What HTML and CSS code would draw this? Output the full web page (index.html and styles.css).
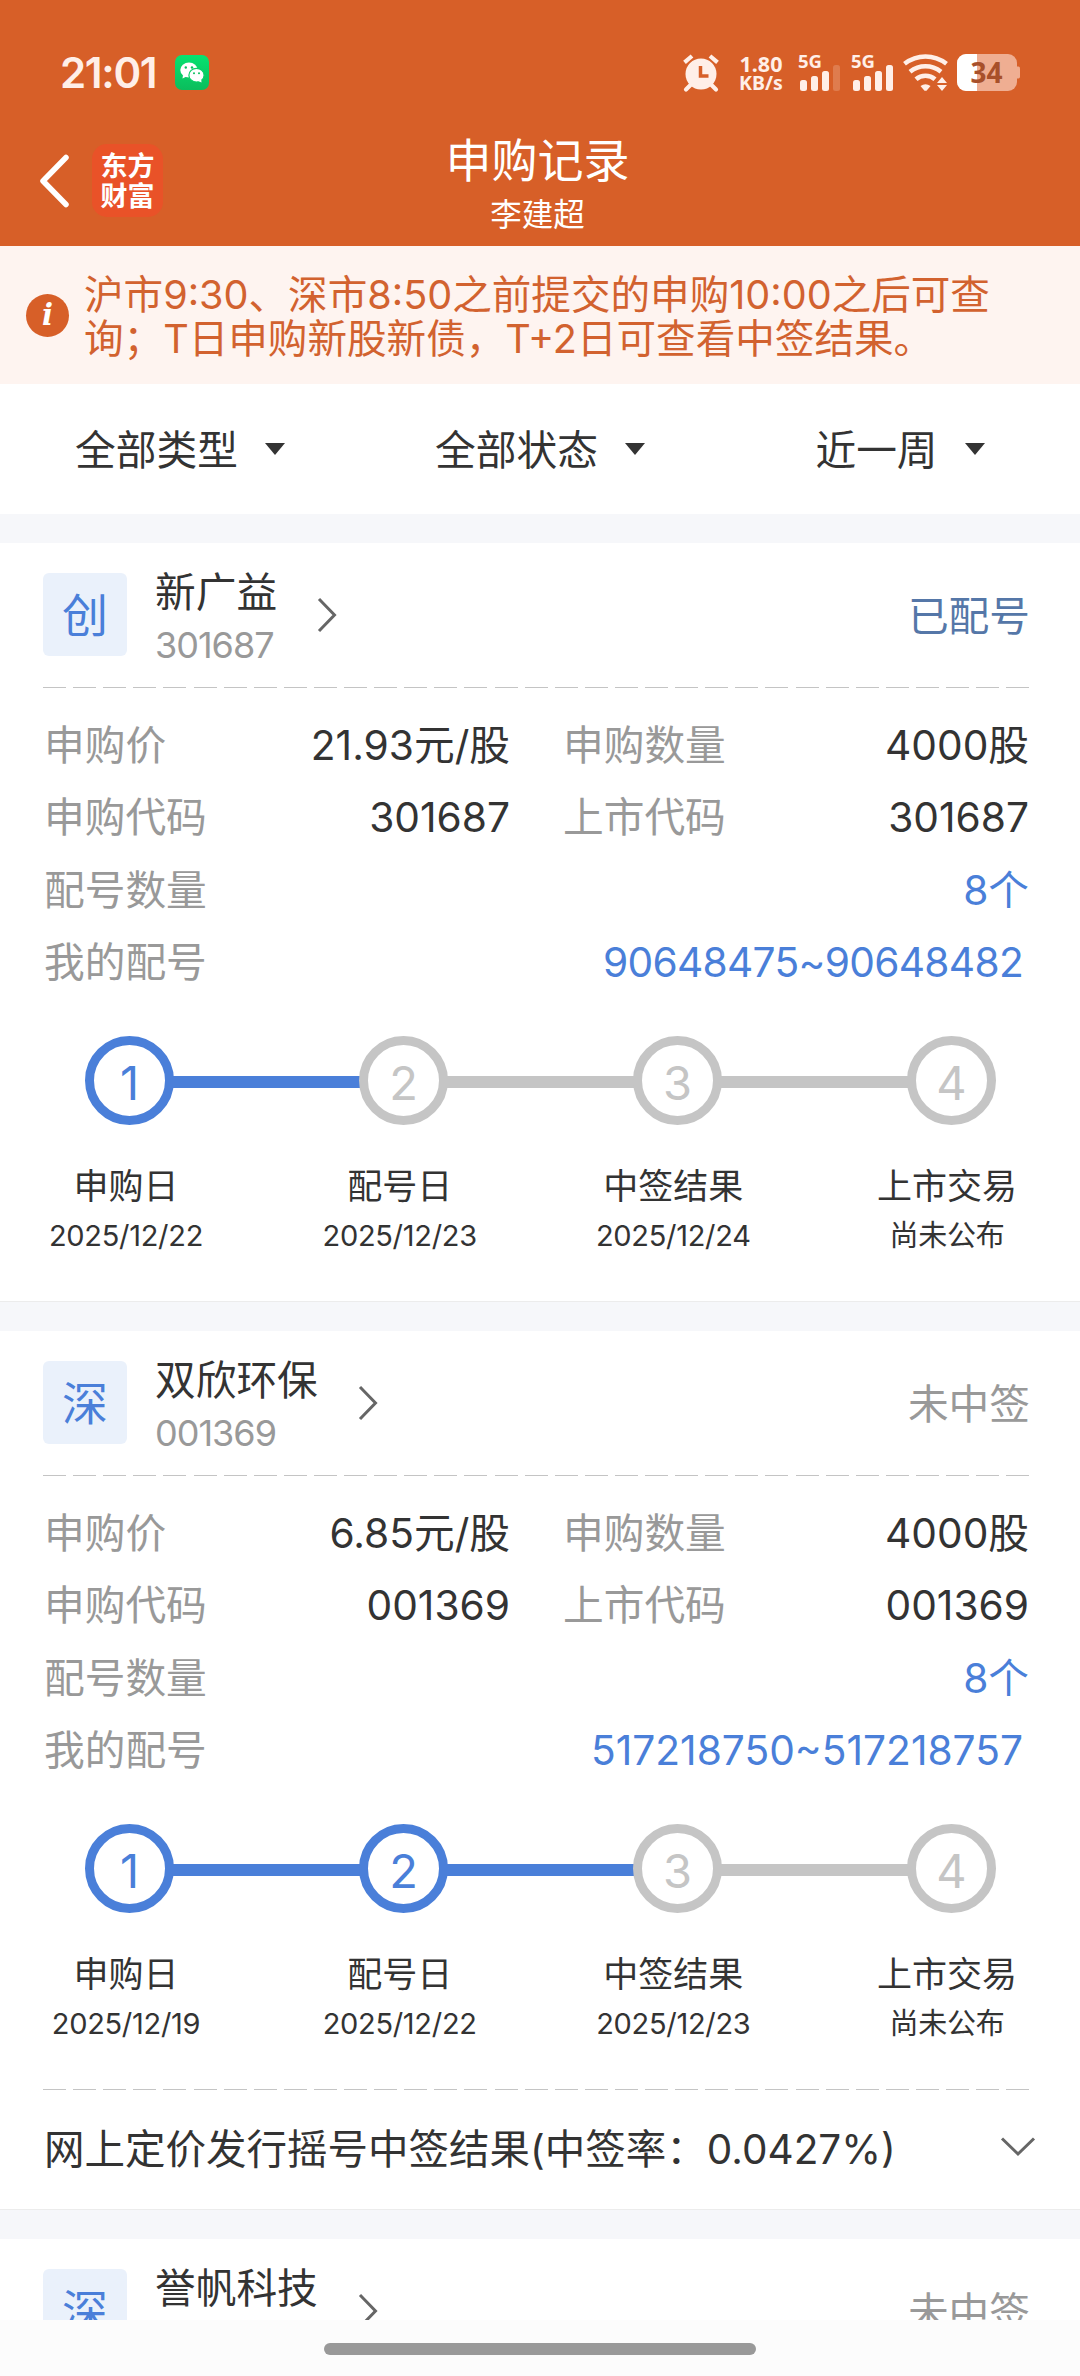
FILE: index.html
```html
<!DOCTYPE html>
<html lang="zh-CN">
<head>
  <meta charset="UTF-8">
  <meta name="viewport" content="width=device-width, initial-scale=1.0">
  <title>申购记录</title>
  <link rel="stylesheet" href="styles.css">
</head>
<body>
  <header>
    <div class="status-bar">
      <span class="time">21:01</span>
      <svg class="wechat" width="34" height="35" viewBox="0 0 34 35">
        <defs>
          <linearGradient id="green" x1="0" y1="0" x2="0" y2="1">
            <stop offset="0" stop-color="#06e270"/>
            <stop offset="1" stop-color="#0bbd5c"/>
          </linearGradient>
        </defs>
        <rect width="34" height="35" rx="7" fill="url(#green)"/>
        <path d="M8 20l-.5 3.5 4-2z" fill="#fff"/>
        <ellipse cx="14" cy="15" rx="8.7" ry="7.6" fill="#fff"/>
        <ellipse cx="21.5" cy="20.2" rx="7.6" ry="6.8" fill="#fff" stroke="#09cf66" stroke-width="1.2"/>
        <path d="M23 26l3.5 1.5-.3-3z" fill="#fff"/>
        <g fill="#0abf5e">
          <circle cx="10.8" cy="12.5" r="1.2"/>
          <circle cx="17" cy="12.5" r="1.2"/>
          <circle cx="19" cy="18.3" r="1"/>
          <circle cx="24" cy="18.3" r="1"/>
        </g>
      </svg>

      <div class="status-right">
        <svg width="36" height="37" viewBox="0 0 36 37">
          <g stroke="#ffefe8" stroke-width="4.2" fill="none">
            <path d="M1.5 8.3L9 2M27 2l7.500 6.300"/>
            <path d="M3 35.500l5-5M33 35.500l-5-5" stroke-linecap="round"/>
          </g>
          <circle cx="18" cy="20" r="15.500" fill="#ffefe8"/>
          <path d="M17.500 12v10h8" stroke="#d75f28" stroke-width="3.500" fill="none"/>
        </svg>
        <div class="speed"><span>1.80</span><span>KB/s</span></div>
        <svg class="signal" width="43" height="37" viewBox="0 0 43 37">
          <text x="0" y="14">5G</text>
          <rect x="2" y="26" width="7" height="11" rx="2.500"/>
          <rect x="13" y="22" width="7" height="15" rx="2.500"/>
          <rect x="24" y="17" width="7" height="20" rx="2.500"/>
          <rect x="35" y="11" width="7" height="26" rx="2.500" opacity=".2"/>
        </svg>
        <svg class="signal second" width="43" height="37" viewBox="0 0 43 37">
          <text x="0" y="14">5G</text>
          <rect x="2" y="26" width="7" height="11" rx="2.500"/>
          <rect x="13" y="22" width="7" height="15" rx="2.500"/>
          <rect x="24" y="17" width="7" height="20" rx="2.500"/>
          <rect x="35" y="11" width="7" height="26" rx="2.500"/>
        </svg>
        <svg class="wifi" width="46" height="37" viewBox="0 0 46 37">
          <g stroke="#ffefe8" stroke-width="4.600" fill="none">
            <path d="M1.500 9.800Q11 2.500 22.500 2.500T43.500 9.800"/>
            <path d="M7 17.800Q14 12.300 22.500 12.300T38 17.800"/>
            <path d="M13 25.300Q17 21.800 22.500 21.800T32 25.300"/>
          </g>
          <path d="M17.500 32q5-3.500 10 0l-4 4.800h-2z" fill="#ffefe8"/>
          <path d="M39 23l5 6H34zM39 37l5-6H34z" fill="#ffefe8"/>
        </svg>
        <svg class="battery" width="63" height="37" viewBox="0 0 63 37">
          <path d="M60 12.500h1.500q1.500 0 1.500 2v8q0 2-1.500 2H60z" fill="#efae92"/>
          <rect width="60" height="37" rx="9" fill="#efae92"/>
          <path d="M9 0h11v37H9a9 9 0 0 1-9-9V9a9 9 0 0 1 9-9z" fill="#fff"/>
          <text x="29.500" y="28.500">34</text>
        </svg>
      </div>
    </div>

    <div class="nav">
      <div class="nav-left">
        <svg width="31" height="54" viewBox="0 0 31 54">
          <path d="M27 3.500L4 27l23 23.500" fill="none" stroke="#fff" stroke-width="5.500" stroke-linecap="round" stroke-linejoin="round"/>
        </svg>
        <div class="logo">东方<br>财富</div>
      </div>
      <div class="nav-title">
        <h1>申购记录</h1>
        <p>李建超</p>
      </div>
    </div>
  </header>

  <div class="notice">
    <span class="info">i</span>
    <p>沪市9:30、深市8:50之前提交的申购10:00之后可查<br>询；T日申购新股新债，T+2日可查看中签结果。</p>
  </div>

  <div class="filters">
    <div>全部类型<i></i></div>
    <div>全部状态<i></i></div>
    <div>近一周<i></i></div>
  </div>

  <main>
    <section class="card">
      <div class="card-head">
        <span class="badge">创</span>
        <div class="stock">
          <h2>新广益</h2>
          <p>301687</p>
        </div>
        <svg class="arrow" width="20" height="34" viewBox="0 0 20 34"><path d="M2 1l15.500 16L2 33"/></svg>
        <span class="state done">已配号</span>
      </div>
      <div class="dash"></div>
      <div class="rows">
        <div class="row">
          <div><span>申购价</span><b>21.93元/股</b></div>
          <div><span>申购数量</span><b>4000股</b></div>
        </div>
        <div class="row">
          <div><span>申购代码</span><b>301687</b></div>
          <div><span>上市代码</span><b>301687</b></div>
        </div>
        <div class="row">
          <div><span>配号数量</span><b class="blue">8个</b></div>
        </div>
        <div class="row">
          <div><span>我的配号</span><b class="blue range">90648475~90648482</b></div>
        </div>
      </div>
      <div class="steps">
        <span class="step on">1</span>
        <span class="line on"></span>
        <span class="step">2</span>
        <span class="line"></span>
        <span class="step">3</span>
        <span class="line"></span>
        <span class="step">4</span>
      </div>
      <div class="labels">
        <div><h3>申购日</h3><p>2025/12/22</p></div>
        <div><h3>配号日</h3><p>2025/12/23</p></div>
        <div><h3>中签结果</h3><p>2025/12/24</p></div>
        <div><h3>上市交易</h3><p>尚未公布</p></div>
      </div>
    </section>

    <section class="card">
      <div class="card-head">
        <span class="badge">深</span>
        <div class="stock">
          <h2>双欣环保</h2>
          <p>001369</p>
        </div>
        <svg class="arrow" width="20" height="34" viewBox="0 0 20 34"><path d="M2 1l15.500 16L2 33"/></svg>
        <span class="state">未中签</span>
      </div>
      <div class="dash"></div>
      <div class="rows">
        <div class="row">
          <div><span>申购价</span><b>6.85元/股</b></div>
          <div><span>申购数量</span><b>4000股</b></div>
        </div>
        <div class="row">
          <div><span>申购代码</span><b>001369</b></div>
          <div><span>上市代码</span><b>001369</b></div>
        </div>
        <div class="row">
          <div><span>配号数量</span><b class="blue">8个</b></div>
        </div>
        <div class="row">
          <div><span>我的配号</span><b class="blue range long">517218750~517218757</b></div>
        </div>
      </div>
      <div class="steps">
        <span class="step on">1</span>
        <span class="line on"></span>
        <span class="step on">2</span>
        <span class="line on"></span>
        <span class="step">3</span>
        <span class="line"></span>
        <span class="step">4</span>
      </div>
      <div class="labels">
        <div><h3>申购日</h3><p>2025/12/19</p></div>
        <div><h3>配号日</h3><p>2025/12/22</p></div>
        <div><h3>中签结果</h3><p>2025/12/23</p></div>
        <div><h3>上市交易</h3><p>尚未公布</p></div>
      </div>
      <div class="dash"></div>
      <div class="result">
        <p>网上定价发行摇号中签结果(中签率：0.0427%)</p>
        <svg width="34" height="20" viewBox="0 0 34 20"><path d="M1 1.500l16 15.500 16-15.500"/></svg>
      </div>
    </section>

    <section class="card">
      <div class="card-head">
        <span class="badge">深</span>
        <div class="stock">
          <h2>誉帆科技</h2>
        </div>
        <svg class="arrow" width="20" height="34" viewBox="0 0 20 34"><path d="M2 1l15.500 16L2 33"/></svg>
        <span class="state">未中签</span>
      </div>
    </section>
  </main>

  <footer>
    <span></span>
  </footer>
</body>
</html>
```
FILE: styles.css
```css
* {
  margin: 0;
  padding: 0;
  box-sizing: border-box;
}

body {
  width: 1080px;
  height: 2376px;
  overflow: hidden;
  display: flex;
  flex-direction: column;
  background: #f6f7fa;
  color: #333;
  font-family: Inter, "Noto Sans CJK SC", sans-serif;
  font-size: 40.700px;
}

h1, h2, h3, b {
  font-weight: 400;
}

svg {
  display: block;
  flex: none;
  overflow: visible;
}

/* header */
header {
  flex: none;
  height: 246px;
  background: #d75f28;
  color: #fff;
}

.status-bar {
  display: flex;
  height: 91px;
  padding: 54px 60px 0 60px;
}

.time {
  width: 115px;
  line-height: 37px;
  font-size: 42px;
  font-weight: 600;
  letter-spacing: -1.300px;
  color: #ffefe8;
}

.wechat {
  margin-top: 1px;
}

.status-right {
  display: flex;
  margin-left: auto;
}

.speed {
  width: 46px;
  margin: 0 14px 0 19px;
  display: flex;
  flex-direction: column;
  align-items: center;
  font: 700 19.500px/19px "Noto Sans", sans-serif;
  color: #ffefe8;
}

.speed span:first-child {
  font-size: 21.500px;
}

.signal {
  fill: #ffefe8;
  font: 700 18.500px "Noto Sans", sans-serif;
}

.second {
  margin-left: 10px;
}

.wifi {
  margin: 0 8px 0 9px;
}

.battery text {
  fill: #a8502a;
  font: 700 28px "Noto Sans", sans-serif;
  text-anchor: middle;
}

.nav {
  display: grid;
  grid-template-columns: 200px 675px 205px;
  height: 155px;
}

.nav-left {
  display: flex;
  align-items: center;
  gap: 22px;
  padding: 23px 0 0 39px;
  height: 155px;
}

.nav-left svg {
  margin-top: 2px;
}

.logo {
  width: 71px;
  height: 73px;
  padding-top: 6px;
  border-radius: 15px;
  background: #e95228;
  text-align: center;
  font-family: "Noto Sans CJK SC", sans-serif;
  font-size: 27px;
  font-weight: 700;
  line-height: 30px;
}

.nav-title {
  padding-top: 39px;
  text-align: center;
}

.nav-title h1 {
  font-size: 46px;
  line-height: 60px;
}

.nav-title p {
  font-size: 31.500px;
  line-height: 50px;
}

/* tips */
.notice {
  flex: none;
  display: flex;
  align-items: center;
  gap: 15px;
  height: 138px;
  padding: 0 0 0 26px;
  background: #fef4f0;
  color: #d2622f;
}

.notice p {
  padding-top: 4px;
  font-size: 39.600px;
  line-height: 44px;
  white-space: nowrap;
}

.info {
  width: 43px;
  height: 43px;
  border-radius: 50%;
  background: #d75f28;
  color: #fff;
  text-align: center;
  font: italic 700 29px/43px "DejaVu Serif", serif;
}

.filters {
  flex: none;
  display: grid;
  grid-template-columns: repeat(3, 1fr);
  height: 130px;
  margin-bottom: 29px;
  background: #fff;
}

.filters div {
  display: flex;
  align-items: center;
  justify-content: center;
  gap: 27px;
  padding-bottom: 4px;
}

.filters i {
  margin-top: 4px;
  border: 10px solid transparent;
  border-top: 12px solid #333;
  border-bottom: 0;
}

/* cards */
main {
  flex: 1;
  min-height: 0;
  overflow: hidden;
}

.card {
  margin-bottom: 29px;
  padding: 0 50px 0 43px;
  border-bottom: 1px solid #ececec;
  background: #fff;
}

.card-head {
  display: flex;
  height: 144px;
  padding-top: 30px;
}

.badge {
  width: 84px;
  height: 83px;
  border-radius: 6px;
  background: #eaf1fb;
  color: #4a7fd9;
  font-size: 46px;
  line-height: 84px;
  text-align: center;
}

.stock {
  margin: -6px 40px 0 28px;
}

.stock h2 {
  font-size: 40.700px;
  line-height: 52px;
}

.stock p {
  font-size: 36px;
  line-height: 52px;
  letter-spacing: -1px;
  color: #999;
}

.arrow {
  margin-top: 25px;
}

.arrow path,
.result path {
  fill: none;
  stroke: #666;
  stroke-width: 3;
}

.state {
  margin-left: auto;
  line-height: 87px;
  color: #999;
}

.state.done {
  color: #5577a8;
}

.dash {
  height: 1px;
  background: repeating-linear-gradient(90deg, #c4c4c4 0 23px, transparent 23px 30.100px);
}

.rows {
  padding: 22px 1px 0 1px;
}

.row {
  display: flex;
  gap: 53px;
  height: 72.250px;
  line-height: 72.250px;
}

.row div {
  flex: 1;
  display: flex;
  justify-content: space-between;
  color: #999;
}

.row b {
  color: #333;
}

.row .blue {
  color: #4a7fd9;
}

.row .range {
  padding-right: 6px;
  letter-spacing: -.700px;
}

.row .long {
  letter-spacing: 0;
}

.steps {
  display: flex;
  align-items: center;
  width: 911px;
  margin: 37px 0 36px 42px;
}

.step {
  width: 89px;
  height: 89px;
  border: 9px solid #c5c5c5;
  border-radius: 50%;
  color: #c5c5c5;
  font-size: 47px;
  line-height: 75px;
  text-align: center;
}

.line {
  flex: 1;
  height: 12px;
  margin: 3px -2px 0;
  background: #c5c5c5;
}

.step.on {
  border-color: #4a7fd9;
  color: #4a7fd9;
}

.line.on {
  background: #4a7fd9;
}

.labels {
  display: flex;
  justify-content: space-between;
  padding-bottom: 40px;
}

.labels div {
  width: 166px;
  text-align: center;
  white-space: nowrap;
}

.labels h3 {
  font-size: 35px;
  line-height: 50px;
}

.labels p {
  font-size: 29px;
  line-height: 50px;
  letter-spacing: -.300px;
}

.result {
  display: flex;
  align-items: center;
  justify-content: space-between;
  height: 119px;
  margin-right: -5px;
  padding: 0 0 6px 1px;
}

.result p {
  font-size: 40.500px;
}

/* bottom gesture bar */
footer {
  flex: none;
  display: flex;
  justify-content: center;
  height: 56px;
  padding-top: 23px;
  background: #fcfcfc;
}

footer span {
  width: 432px;
  height: 12px;
  border-radius: 6px;
  background: #999;
}
```
